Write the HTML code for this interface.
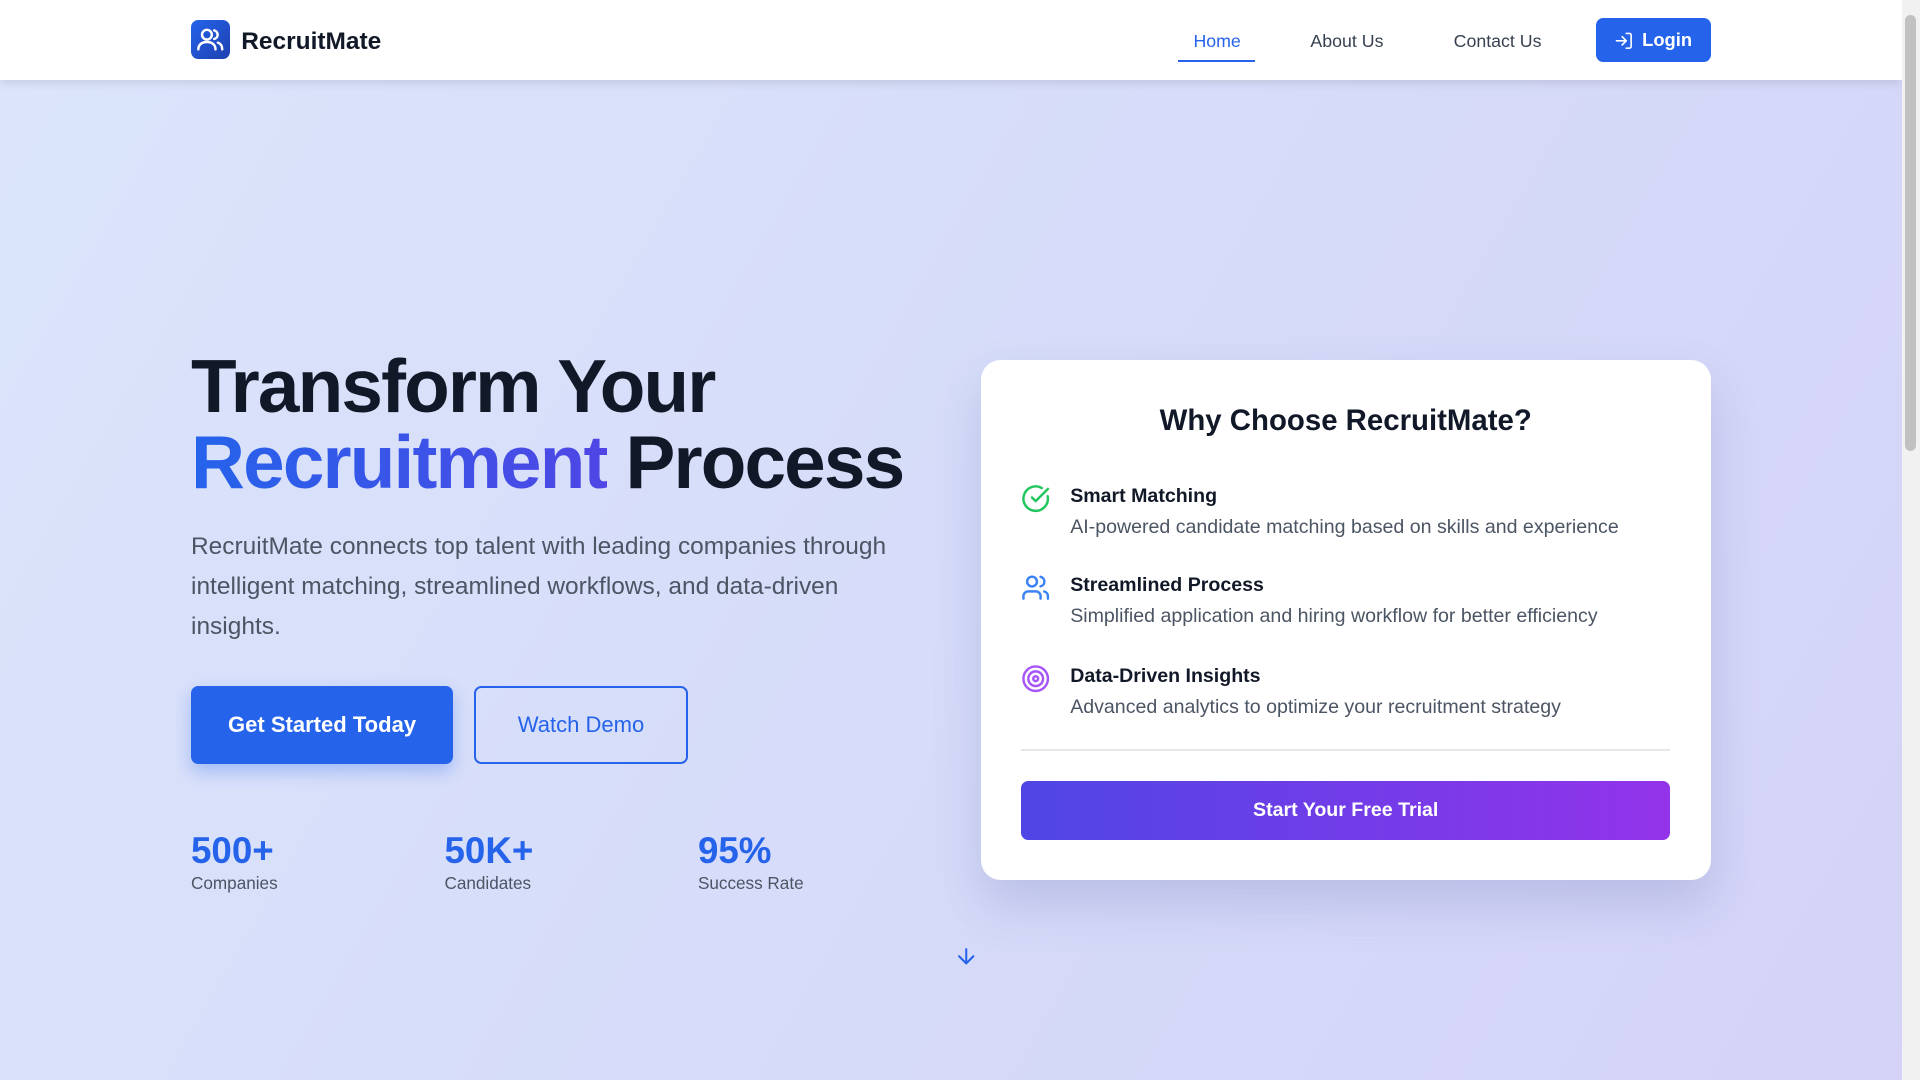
<!DOCTYPE html>
<html><head><meta charset="utf-8"><style>
html{zoom:1.22449}
*{box-sizing:border-box;margin:0;padding:0}
body{width:1568px;height:882px;overflow:hidden;font-family:"Liberation Sans",sans-serif;background:linear-gradient(120deg,#dbe5fb 0%,#d6dcf9 50%,#d4d3f7 100%);position:relative;color:#111827}
.nav{position:absolute;left:0;top:0;width:1553px;height:65px;background:#fff;box-shadow:0 2px 8px rgba(0,0,0,.12)}
.logo{position:absolute;left:156px;top:16px;width:32px;height:32px;border-radius:6px;background:linear-gradient(135deg,#2563eb,#1e40af)}
.brand{position:absolute;left:197px;top:23px;font-size:20px;font-weight:bold;color:#111827}
.nl{position:absolute;top:25px;font-size:14.5px;color:#374151;transform:translateX(-50%)}
.login{position:absolute;left:1303px;top:15px;width:94px;height:36px;border-radius:6px;background:#2563eb;color:#fff;font-weight:bold;font-size:15px;display:flex;align-items:center;justify-content:center;gap:7px}
h1{position:absolute;left:156px;top:285px;font-size:61px;line-height:62px;font-weight:bold;letter-spacing:-1.5px;color:#111827}
.g{background:linear-gradient(90deg,#2563eb,#4f46e5);-webkit-background-clip:text;color:transparent}
.p{position:absolute;left:156px;top:430px;width:600px;font-size:20px;line-height:33px;color:#4b5563}
.b1{position:absolute;left:156px;top:560px;width:214px;height:64px;background:#2563eb;border-radius:6px;color:#fff;font-size:18px;font-weight:bold;display:flex;align-items:center;justify-content:center;box-shadow:0 6px 14px rgba(37,99,235,.3)}
.b2{position:absolute;left:387px;top:560px;width:175px;height:64px;border:2px solid #2563eb;border-radius:6px;color:#2563eb;font-size:18px;display:flex;align-items:center;justify-content:center}
.st{position:absolute;top:678px}
.st b{display:block;font-size:30px;color:#2563eb;line-height:34px}
.st span{font-size:14px;color:#4b5563}
.card{position:absolute;left:801px;top:294px;width:596px;height:425px;background:#fff;border-radius:16px;box-shadow:0 20px 40px rgba(60,70,150,.18)}
.ct{position:absolute;top:36px;width:100%;text-align:center;font-size:24px;font-weight:bold}
.it{position:absolute;left:33px}
.it svg{position:absolute;left:0;top:-1px}
.it b{position:absolute;left:40px;top:0;font-size:16px;white-space:nowrap}
.it span{position:absolute;left:40px;top:25px;font-size:16px;color:#4b5563;white-space:nowrap}
.hr{position:absolute;left:33px;top:318px;width:530px;height:1px;background:#e5e7eb}
.cb{position:absolute;left:33px;top:344px;width:530px;height:48px;border-radius:6px;background:linear-gradient(90deg,#4f46e5,#9333ea);color:#fff;font-weight:bold;font-size:16px;display:flex;align-items:center;justify-content:center}
.sb{position:absolute;right:0;top:0;width:15px;height:882px;background:#f1f1f1}
.th{position:absolute;right:3px;top:12px;width:9px;height:356px;background:#c1c1c1;border-radius:5px}
</style></head><body>
<div class="nav">
<div class="logo"><svg width="32" height="32" viewBox="0 0 32 32" fill="none" stroke="#fff" stroke-width="2" stroke-linecap="round"><circle cx="13" cy="12" r="4"/><path d="M6 24c0-4 3-6 7-6s7 2 7 6"/><path d="M19 8.5a3.6 3.6 0 0 1 0 7"/><path d="M22 18.5c2 .7 3.5 2.5 3.5 5.5"/></svg></div>
<div class="brand">RecruitMate</div>
<div class="nl" style="left:994px;color:#2563eb">Home</div>
<div style="position:absolute;left:962px;top:49px;width:63px;height:2px;background:#2563eb"></div>
<div class="nl" style="left:1100px">About Us</div>
<div class="nl" style="left:1223px">Contact Us</div>
<div class="login"><svg width="16" height="16" viewBox="0 0 24 24" fill="none" stroke="#fff" stroke-width="2" stroke-linecap="round" stroke-linejoin="round"><path d="M15 3h4a2 2 0 0 1 2 2v14a2 2 0 0 1-2 2h-4"/><path d="M10 17l5-5-5-5"/><path d="M15 12H3"/></svg>Login</div>
</div>
<h1>Transform Your<br><span class="g">Recruitment</span> Process</h1>
<div class="p">RecruitMate connects top talent with leading companies through intelligent matching, streamlined workflows, and data-driven insights.</div>
<div class="b1">Get Started Today</div>
<div class="b2">Watch Demo</div>
<div class="st" style="left:156px"><b>500+</b><span>Companies</span></div>
<div class="st" style="left:363px"><b>50K+</b><span>Candidates</span></div>
<div class="st" style="left:570px"><b>95%</b><span>Success Rate</span></div>
<div class="card">
<div class="ct">Why Choose RecruitMate?</div>
<div class="it" style="top:102px"><svg width="24" height="24" viewBox="0 0 24 24" fill="none" stroke="#22c55e" stroke-width="2" stroke-linecap="round" stroke-linejoin="round"><path d="M21.8 10A10 10 0 1 1 17 3.3"/><path d="M9 11l3 3L22 4"/></svg><b>Smart Matching</b><span>AI-powered candidate matching based on skills and experience</span></div>
<div class="it" style="top:175px"><svg width="24" height="24" viewBox="0 0 24 24" fill="none" stroke="#3b82f6" stroke-width="2" stroke-linecap="round" stroke-linejoin="round"><path d="M16 21v-2a4 4 0 0 0-4-4H6a4 4 0 0 0-4 4v2"/><circle cx="9" cy="7" r="4"/><path d="M22 21v-2a4 4 0 0 0-3-3.9"/><path d="M16 3.1a4 4 0 0 1 0 7.8"/></svg><b>Streamlined Process</b><span>Simplified application and hiring workflow for better efficiency</span></div>
<div class="it" style="top:249px"><svg width="24" height="24" viewBox="0 0 24 24" fill="none" stroke="#a855f7" stroke-width="2"><circle cx="12" cy="12" r="10"/><circle cx="12" cy="12" r="6"/><circle cx="12" cy="12" r="2"/></svg><b>Data-Driven Insights</b><span>Advanced analytics to optimize your recruitment strategy</span></div>
<div class="hr"></div>
<div class="cb">Start Your Free Trial</div>
</div>
<svg style="position:absolute;left:779px;top:771px" width="20" height="20" viewBox="0 0 24 24" fill="none" stroke="#2563eb" stroke-width="2" stroke-linecap="round" stroke-linejoin="round"><path d="M12 5v14"/><path d="M19 12l-7 7-7-7"/></svg>
<div class="sb"><div class="th"></div></div>
</body></html>
